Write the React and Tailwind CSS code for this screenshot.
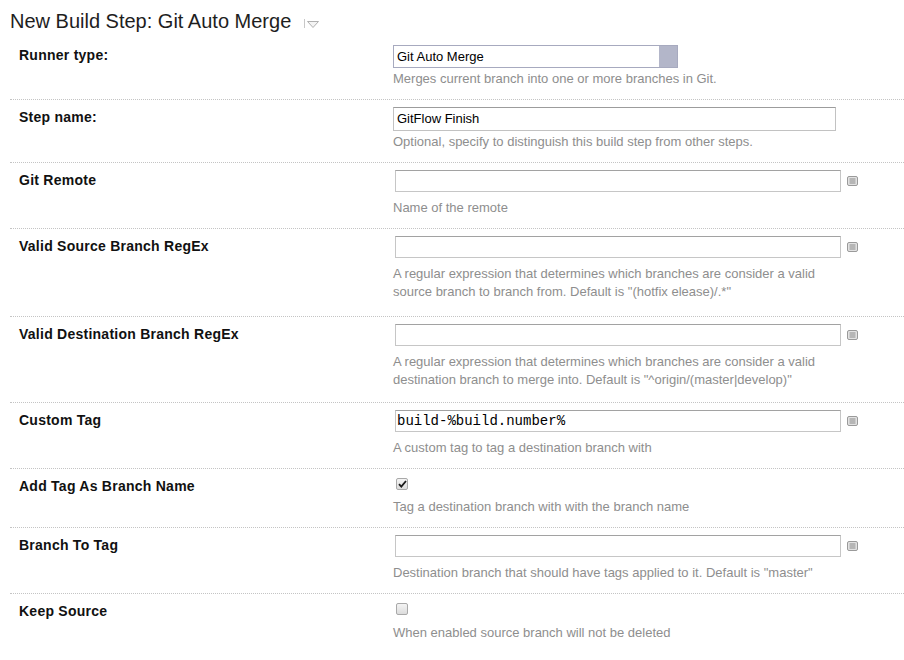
import React from "react"

const sans = "font-['Liberation_Sans',Arial,sans-serif]"

function ParamIcon() {
  return (
    <svg width="11" height="10" viewBox="0 0 11 10" className="ml-[6px] shrink-0">
      <rect x="0.5" y="0.5" width="10" height="9" rx="1.5" fill="#e2e2e2" stroke="#9a9a9a" />
      <line x1="2.5" y1="3" x2="8.5" y2="3" stroke="#8a8a8a" />
      <line x1="2.5" y1="5" x2="8.5" y2="5" stroke="#8a8a8a" />
      <line x1="2.5" y1="7" x2="8.5" y2="7" stroke="#8a8a8a" />
    </svg>
  )
}

function TextInput({ value = "", mono = false }) {
  return (
    <div className="flex items-center">
      <div
        className={`ml-[2px] h-[22px] w-[446px] border border-[#c6c6c6] border-t-[#a2a2a2] bg-white pl-[1px] leading-[20px] text-black ${
          mono ? "font-['Liberation_Mono','Courier_New',monospace] text-[14px]" : "text-[13px]"
        }`}
      >
        {value}
      </div>
      <ParamIcon />
    </div>
  )
}

function Checkbox({ checked }) {
  return (
    <div className="ml-[3px] mt-[2px] flex h-[12px] w-[12px] items-center justify-center rounded-[2px] border border-[#a9a9a9] bg-gradient-to-b from-[#f4f4f4] to-[#dcdcdc]">
      {checked && (
        <svg width="9" height="8" viewBox="0 0 9 8">
          <path d="M1 4.2 L3.3 6.6 L8 1" fill="none" stroke="#1a1a1a" strokeWidth="1.8" />
        </svg>
      )}
    </div>
  )
}

function Row({ label, first, children, note, pb = "pb-[11px]", gap = "mt-[7px]" }) {
  return (
    <div className={`flex pt-[7px] ${pb} ${first ? "" : "border-t border-dotted border-[#c4c4c4]"}`}>
      <div className="w-[383px] shrink-0 pl-[9px] pt-[1px] text-[14px] font-bold leading-[18px] tracking-[0.25px] text-[#111]">
        {label}
      </div>
      <div className="flex-1">
        {children}
        <div className={`${gap} w-[446px] text-[13px] leading-[18px] text-[#8e8e8e]`}>{note}</div>
      </div>
    </div>
  )
}

export default function App() {
  return (
    <div className={`min-h-[660px] w-[904px] bg-white pl-[10px] ${sans}`}>
      <div className="flex h-[38px] items-start pt-[9px]">
        <h1 className="text-[20px] leading-[24px] text-[#1e1e1e]">New Build Step: Git Auto Merge</h1>
        <div className="ml-[13px] mt-[10px] h-[9px] w-px bg-[#c8c8c8]" />
        <svg width="12" height="7" viewBox="0 0 12 7" className="ml-[2px] mt-[12px]">
          <path d="M0.5 0.5 H11.5 L6 6.5 Z" fill="#f4f4f4" stroke="#b0b0b0" />
        </svg>
      </div>

      <Row first label="Runner type:" note="Merges current branch into one or more branches in Git." gap="mt-[2px]">
        <div className="flex h-[23px] w-[285px] border border-[#a7aabf] bg-white">
          <div className="flex-1 pl-[3px] text-[13px] leading-[21px] text-black">Git Auto Merge</div>
          <div className="w-[18px] bg-[#b3b6c9]" />
        </div>
      </Row>

      <Row label="Step name:" note="Optional, specify to distinguish this build step from other steps." gap="mt-[2px]">
        <div className="h-[24px] w-[443px] border border-[#c2c2c2] border-t-[#9c9c9c] bg-white pl-[3px] text-[13px] leading-[22px] text-black">
          GitFlow Finish
        </div>
      </Row>

      <Row label="Git Remote" note="Name of the remote">
        <TextInput />
      </Row>

      <Row
        label="Valid Source Branch RegEx"
        pb="pb-[15px]"
        note={'A regular expression that determines which branches are consider a valid source branch to branch from. Default is "(hotfix elease)/.*"'}
      >
        <TextInput />
      </Row>

      <Row
        label="Valid Destination Branch RegEx"
        pb="pb-[13px]"
        note={'A regular expression that determines which branches are consider a valid destination branch to merge into. Default is "^origin/(master|develop)"'}
      >
        <TextInput />
      </Row>

      <Row label="Custom Tag" note="A custom tag to tag a destination branch with">
        <TextInput value="build-%build.number%" mono />
      </Row>

      <Row label="Add Tag As Branch Name" note="Tag a destination branch with with the branch name" gap="mt-[8px]">
        <Checkbox checked />
      </Row>

      <Row label="Branch To Tag" note={'Destination branch that should have tags applied to it. Default is "master"'}>
        <TextInput />
      </Row>

      <Row label="Keep Source" note="When enabled source branch will not be deleted" gap="mt-[9px]">
        <Checkbox />
      </Row>
    </div>
  )
}
